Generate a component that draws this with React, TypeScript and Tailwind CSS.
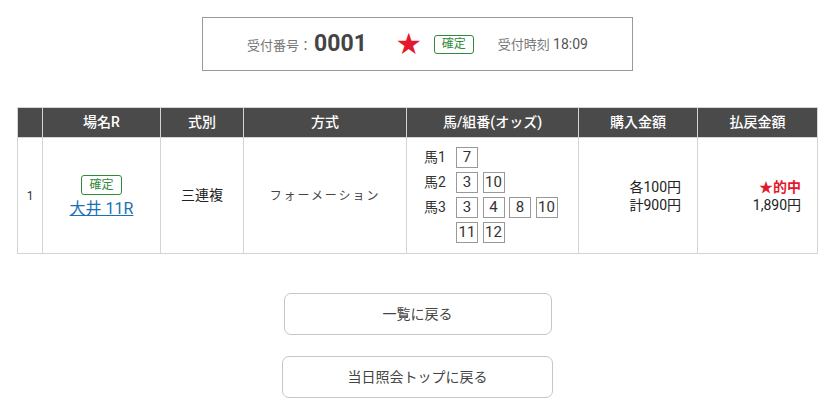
const font = { fontFamily: "Roboto, 'Noto Sans CJK JP', sans-serif" };

const Badge = ({ className = "" }: { className?: string }) => (
  <span
    className={`inline-flex items-center justify-center border border-[#2f8a3c] rounded-[3px] text-[#2f8a3c] text-[12px] leading-none ${className}`}
  >
    確定
  </span>
);

const NumBox = ({ n }: { n: number }) => (
  <span className="w-[22px] h-[21px] border border-[#999] flex items-center justify-center text-[15px] text-[#333] leading-none">
    {n}
  </span>
);

const horses: { label: string; nums: number[] }[] = [
  { label: "馬1", nums: [7] },
  { label: "馬2", nums: [3, 10] },
  { label: "馬3", nums: [3, 4, 8, 10, 11, 12] },
];

const App = () => {
  return (
    <div className="w-[835px] h-[419px] bg-white text-[#333]" style={font}>
      {/* receipt header */}
      <div className="pt-[17px]">
        <div className="mx-auto w-[431px] h-[54px] border border-[#9a9a9a] flex items-center justify-center">
          <span className="text-[13px] text-[#777] mt-[3px]">受付番号：</span>
          <span className="text-[23px] font-bold text-[#444] ml-[2px]">0001</span>
          <span className="text-[#e3182d] text-[24px] leading-none ml-[30px]">★</span>
          <Badge className="w-[40px] h-[19px] ml-[13px]" />
          <span className="text-[13px] text-[#777] ml-[24px]">
            受付時刻 <span className="text-[14px] text-[#555]">18:09</span>
          </span>
        </div>
      </div>

      {/* result table */}
      <div className="px-[17px] pt-[36px]">
        <table className="w-full border-collapse text-[14px]">
          <thead>
            <tr className="bg-[#4a4a4a] text-white h-[30px]">
              <th className="w-[25px] border border-[#d4d4d4] font-medium"></th>
              <th className="w-[118px] border border-[#d4d4d4] font-medium">場名R</th>
              <th className="w-[83px] border border-[#d4d4d4] font-medium">式別</th>
              <th className="w-[163px] border border-[#d4d4d4] font-medium">方式</th>
              <th className="w-[172px] border border-[#d4d4d4] font-medium">馬/組番(オッズ)</th>
              <th className="w-[119px] border border-[#d4d4d4] font-medium">購入金額</th>
              <th className="border border-[#d4d4d4] font-medium">払戻金額</th>
            </tr>
          </thead>
          <tbody>
            <tr className="h-[116px]">
              <td className="border border-[#d4d4d4] text-center text-[12px] text-[#333]">1</td>
              <td className="border border-[#d4d4d4] text-center">
                <div className="flex flex-col items-center">
                  <Badge className="w-[41px] h-[20px] mt-[2px]" />
                  <a href="#" className="text-[16px] text-[#1a6fb5] underline mt-[6px] leading-none pb-[2px]">
                    大井 11R
                  </a>
                </div>
              </td>
              <td className="border border-[#d4d4d4] text-center text-[14px] text-[#222]">三連複</td>
              <td className="border border-[#d4d4d4] text-center text-[12px] tracking-[0.16em] text-[#444]">
                フォーメーション
              </td>
              <td className="border border-[#d4d4d4] pl-[17px] pt-[9px] pb-[9px] align-top">
                <div className="flex flex-col gap-[4px]">
                  {horses.map((h) => (
                    <div key={h.label} className="flex items-start">
                      <span className="w-[32px] h-[21px] flex items-center text-[14px] text-[#333]">{h.label}</span>
                      <div className="flex flex-wrap gap-x-[4.5px] gap-y-[4px] w-[106px]">
                        {h.nums.map((n, i) => (
                          <NumBox key={i} n={n} />
                        ))}
                      </div>
                    </div>
                  ))}
                </div>
              </td>
              <td className="border border-[#d4d4d4] text-right pr-[16px] text-[14px] leading-[18px] text-[#222]">
                <div>各100円</div>
                <div>計900円</div>
              </td>
              <td className="border border-[#d4d4d4] text-right pr-[16px] text-[14px] leading-[18px]">
                <div className="text-[#e3182d] font-bold">★的中</div>
                <div className="text-[#222]">1,890円</div>
              </td>
            </tr>
          </tbody>
        </table>
      </div>

      {/* buttons */}
      <div className="flex flex-col items-center gap-[21px] pt-[39px]">
        <button className="w-[268px] h-[42px] border border-[#c6c6c6] rounded-[7px] text-[14px] text-[#444] bg-white">
          一覧に戻る
        </button>
        <button className="w-[271px] h-[42px] border border-[#c6c6c6] rounded-[7px] text-[14px] text-[#444] bg-white">
          当日照会トップに戻る
        </button>
      </div>
    </div>
  );
};

export default App;
